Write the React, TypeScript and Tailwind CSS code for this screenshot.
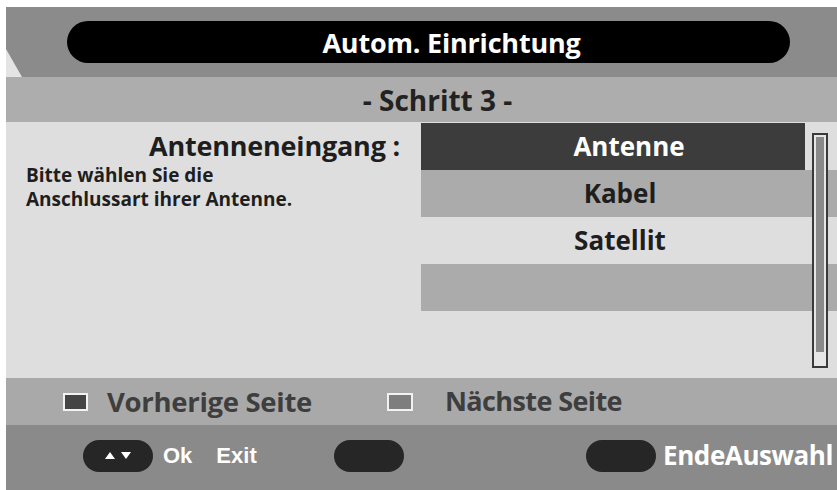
import React from "react";

const osd = { fontFamily: '"Open Sans", "Noto Sans", sans-serif' };
const arial = { fontFamily: '"Liberation Sans", Arial, sans-serif' };

const options = [
    { label: "Antenne", tone: "selected" },
    { label: "Kabel", tone: "dark" },
    { label: "Satellit", tone: "light" },
    { label: "", tone: "dark" },
];

const Pill: React.FC<{ children?: React.ReactNode }> = ({ children }) => (
    <div className="flex h-[32px] w-[70px] shrink-0 items-center justify-center gap-[6px] rounded-full bg-[#262626]">
        {children}
    </div>
);

export default function App() {
    return (
        <div className="h-[490px] w-[837px] overflow-hidden bg-white pl-[6px] pt-[7px]" style={osd}>
            <div className="flex h-[483px] w-[831px] flex-col">
                {/* header */}
                <div className="relative flex h-[70px] items-center bg-[#8b8b8b] pl-[61px] pr-[47px]">
                    <svg className="absolute bottom-0 left-0" width="16" height="28" viewBox="0 0 16 28">
                        <polygon points="0,0 16,28 0,28" fill="#e4e4e4" />
                    </svg>
                    <div className="flex h-[42px] flex-1 items-center justify-center rounded-full bg-black pl-[46px]">
                        <span className="text-[27px] font-bold leading-none tracking-[-0.2px] text-white">
                            Autom. Einrichtung
                        </span>
                    </div>
                </div>

                {/* step */}
                <div className="flex h-[45px] items-center justify-center bg-[#adadad] pl-[32px]">
                    <span className="text-[28px] font-bold leading-none text-[#222]">- Schritt 3 -</span>
                </div>

                {/* content */}
                <div className="flex h-[256px] bg-[#dedede]">
                    <div className="w-[415px] pt-[8px]">
                        <div className="pr-[21px] text-right text-[27px] font-bold leading-[32px] tracking-[-0.2px] text-[#1e1e1e]">
                            Antenneneingang :
                        </div>
                        <div className="mt-[1px] pl-[20px] text-[19px] font-bold leading-[24px] text-[#1e1e1e]">
                            <p>Bitte wählen Sie die</p>
                            <p>Anschlussart ihrer Antenne.</p>
                        </div>
                    </div>
                    <div className="relative flex-1 pt-[1px]">
                        {options.map((o, i) => (
                            <div
                                key={i}
                                className={
                                    o.tone === "selected"
                                        ? "flex h-[47px] w-[384px] items-center justify-center bg-[#3c3c3c] pl-[32px] text-[26px] font-bold text-white"
                                        : o.tone === "dark"
                                        ? "flex h-[47px] items-center justify-center bg-[#ababab] pr-[18px] text-[26px] font-bold text-[#1e1e1e]"
                                        : "flex h-[47px] items-center justify-center pr-[18px] text-[26px] font-bold text-[#1e1e1e]"
                                }
                            >
                                {o.label}
                            </div>
                        ))}
                        {/* scrollbar */}
                        <div className="absolute right-[9px] top-[11px] h-[235px] w-[16px] border-2 border-[#3a3a3a] bg-[#e6e6e6] p-[2px]">
                            <div className="h-[215px] w-full bg-[#8a8a8a]" />
                        </div>
                    </div>
                </div>

                {/* color keys */}
                <div className="flex h-[47px] items-center bg-[#a9a9a9] pl-[57px]">
                    <div className="h-[18px] w-[25px] shrink-0 border-2 border-[#f2f2f2] bg-[#444]" />
                    <span className="ml-[19px] w-[280px] text-[27.5px] font-bold tracking-[-0.3px] text-[#3e3e3e]">
                        Vorherige Seite
                    </span>
                    <div className="h-[18px] w-[26px] shrink-0 border-2 border-[#f2f2f2] bg-[#7e7e7e]" />
                    <span className="ml-[32px] text-[27px] font-bold tracking-[-0.6px] text-[#3e3e3e]">
                        Nächste Seite
                    </span>
                </div>

                {/* hints */}
                <div className="flex flex-1 items-center bg-[#8a8a8a] pb-[4px] pl-[77px]">
                    <div className="flex w-[251px] shrink-0 items-center">
                        <Pill>
                            <svg width="10" height="7" viewBox="0 0 10 7">
                                <polygon points="5,0 10,7 0,7" fill="white" />
                            </svg>
                            <svg width="10" height="7" viewBox="0 0 10 7">
                                <polygon points="0,0 10,0 5,7" fill="white" />
                            </svg>
                        </Pill>
                        <span className="ml-[10px] text-[22px] font-bold text-white" style={arial}>
                            Ok
                        </span>
                        <span className="ml-[24px] text-[22px] font-bold text-white" style={arial}>
                            Exit
                        </span>
                    </div>
                    <div className="w-[252px] shrink-0">
                        <Pill />
                    </div>
                    <Pill />
                    <span className="ml-[7px] whitespace-nowrap text-[26px] font-bold tracking-[-0.4px] text-white">
                        EndeAuswahl
                    </span>
                </div>
            </div>
        </div>
    );
}
